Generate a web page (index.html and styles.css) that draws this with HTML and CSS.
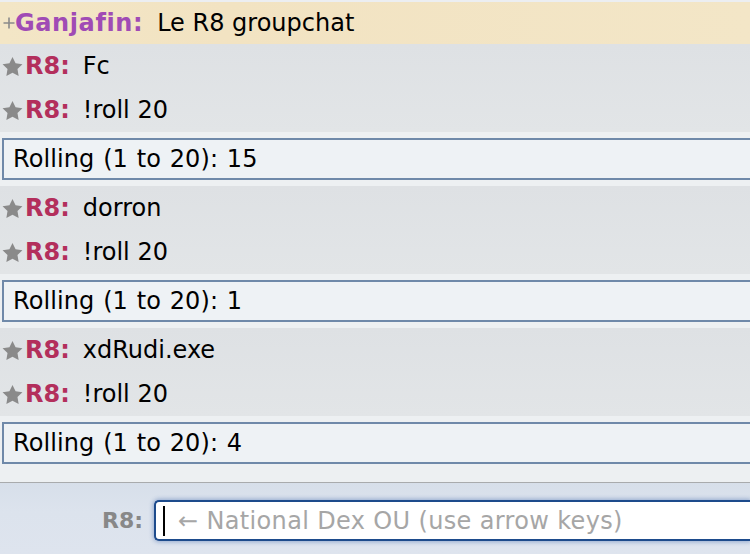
FILE: index.html
```html
<!DOCTYPE html>
<html>
<head>
<meta charset="utf-8">
<link rel="stylesheet" href="styles.css">
</head>
<body>
<div class="room">
  <div class="log">
    <div class="msg highlight"><svg class="plus" viewBox="0 0 12 12" width="12" height="12"><path d="M6 0.5V11.5M0.5 6H11.5" stroke="#8a8a8a" stroke-width="1.6" fill="none"/></svg><strong class="name ganja">Ganjafin:</strong><em class="text">Le R8 groupchat</em></div>
    <div class="block">
      <div class="msg"><svg class="star" viewBox="2 2 20 19.1" width="21" height="19"><path d="M12 2l3.09 6.26L22 9.27l-5 4.87 1.18 6.88L12 17.77l-6.18 3.25L7 14.14 2 9.27l6.91-1.01L12 2z" fill="#8a8a8a"/></svg><strong class="name r8">R8:</strong><em class="text">Fc</em></div>
      <div class="msg"><svg class="star" viewBox="2 2 20 19.1" width="21" height="19"><path d="M12 2l3.09 6.26L22 9.27l-5 4.87 1.18 6.88L12 17.77l-6.18 3.25L7 14.14 2 9.27l6.91-1.01L12 2z" fill="#8a8a8a"/></svg><strong class="name r8">R8:</strong><em class="text">!roll 20</em></div>
    </div>
    <div class="gap"><div class="roll">Rolling (1 to 20): 15</div></div>
    <div class="block">
      <div class="msg"><svg class="star" viewBox="2 2 20 19.1" width="21" height="19"><path d="M12 2l3.09 6.26L22 9.27l-5 4.87 1.18 6.88L12 17.77l-6.18 3.25L7 14.14 2 9.27l6.91-1.01L12 2z" fill="#8a8a8a"/></svg><strong class="name r8">R8:</strong><em class="text">dorron</em></div>
      <div class="msg"><svg class="star" viewBox="2 2 20 19.1" width="21" height="19"><path d="M12 2l3.09 6.26L22 9.27l-5 4.87 1.18 6.88L12 17.77l-6.18 3.25L7 14.14 2 9.27l6.91-1.01L12 2z" fill="#8a8a8a"/></svg><strong class="name r8">R8:</strong><em class="text">!roll 20</em></div>
    </div>
    <div class="gap"><div class="roll">Rolling (1 to 20): 1</div></div>
    <div class="block">
      <div class="msg"><svg class="star" viewBox="2 2 20 19.1" width="21" height="19"><path d="M12 2l3.09 6.26L22 9.27l-5 4.87 1.18 6.88L12 17.77l-6.18 3.25L7 14.14 2 9.27l6.91-1.01L12 2z" fill="#8a8a8a"/></svg><strong class="name r8">R8:</strong><em class="text">xdRudi.exe</em></div>
      <div class="msg"><svg class="star" viewBox="2 2 20 19.1" width="21" height="19"><path d="M12 2l3.09 6.26L22 9.27l-5 4.87 1.18 6.88L12 17.77l-6.18 3.25L7 14.14 2 9.27l6.91-1.01L12 2z" fill="#8a8a8a"/></svg><strong class="name r8">R8:</strong><em class="text">!roll 20</em></div>
    </div>
    <div class="gap last"><div class="roll">Rolling (1 to 20): 4</div></div>
  </div>
  <div class="composer">
    <label class="me">R8:</label>
    <div class="input"><span class="caret"></span><span class="placeholder">← National Dex OU (use arrow keys)</span></div>
  </div>
</div>
</body>
</html>
```
FILE: styles.css
```css
html, body {
  margin: 0;
  padding: 0;
}
body {
  width: 750px;
  height: 554px;
  overflow: hidden;
  background: #eceef1;
  font-family: "DejaVu Sans", Verdana, sans-serif;
  font-size: 24px;
  color: #000;
}
.room {
  display: flex;
  flex-direction: column;
  height: 554px;
  overflow: hidden;
}
.log {
  padding-top: 2px;
  flex: none;
}
.msg {
  display: flex;
  align-items: center;
  height: 44px;
  white-space: nowrap;
}
.msg.highlight {
  height: 42px;
  background: linear-gradient(90deg, #f3e6c6 0%, #f2e3c2 30%, #f3e6c7 100%);
}
.block {
  background: linear-gradient(180deg, #dee1e4 0%, #e2e5e7 100%);
}
.plus {
  flex: none;
  margin-left: 3px;
}
.star {
  flex: none;
  margin-left: 2px;
}
.name {
  font-weight: bold;
}
.ganja {
  color: #a04bb5;
  letter-spacing: 0.6px;
}
.r8 {
  color: #b32f5c;
  margin-left: 2px;
}
.text {
  font-style: normal;
  margin-left: 14px;
}
.block .text {
  margin-left: 13px;
}
.gap {
  background: #edf0f2;
  padding: 6px 0 6px 2px;
}
.gap.last {
  padding-bottom: 18px;
  border-bottom: 1px solid #a9abad;
}
.roll {
  box-sizing: border-box;
  height: 42px;
  display: flex;
  align-items: center;
  padding-left: 9px;
  background: #eef2f5;
  border: 2px solid #6f89a9;
  border-right: none;
  word-spacing: 1px;
  letter-spacing: 0.1px;
}
.composer {
  flex: 1;
  display: flex;
  align-items: flex-start;
  background: linear-gradient(180deg, #d7dfea 0%, #dce3ed 40%, #dee4ee 100%);
  padding-top: 17px;
}
.me {
  flex: none;
  width: 143px;
  height: 41px;
  line-height: 41px;
  text-align: right;
  font-weight: bold;
  color: #888;
  font-size: 22px;
  margin-right: 11px;
}
.input {
  flex: 1;
  min-width: 0;
  box-sizing: border-box;
  height: 41px;
  display: flex;
  align-items: center;
  background: #fff;
  border: 2px solid #1d4b8c;
  border-right: none;
  border-radius: 5px 0 0 5px;
  box-shadow: 0 0 4px 1px rgba(60, 100, 170, 0.45);
  padding-left: 7px;
  white-space: nowrap;
  overflow: hidden;
}
.caret {
  flex: none;
  width: 2px;
  height: 30px;
  background: #000;
  margin-right: 13px;
}
.placeholder {
  color: #a6a6a6;
  letter-spacing: 0.35px;
}
```
